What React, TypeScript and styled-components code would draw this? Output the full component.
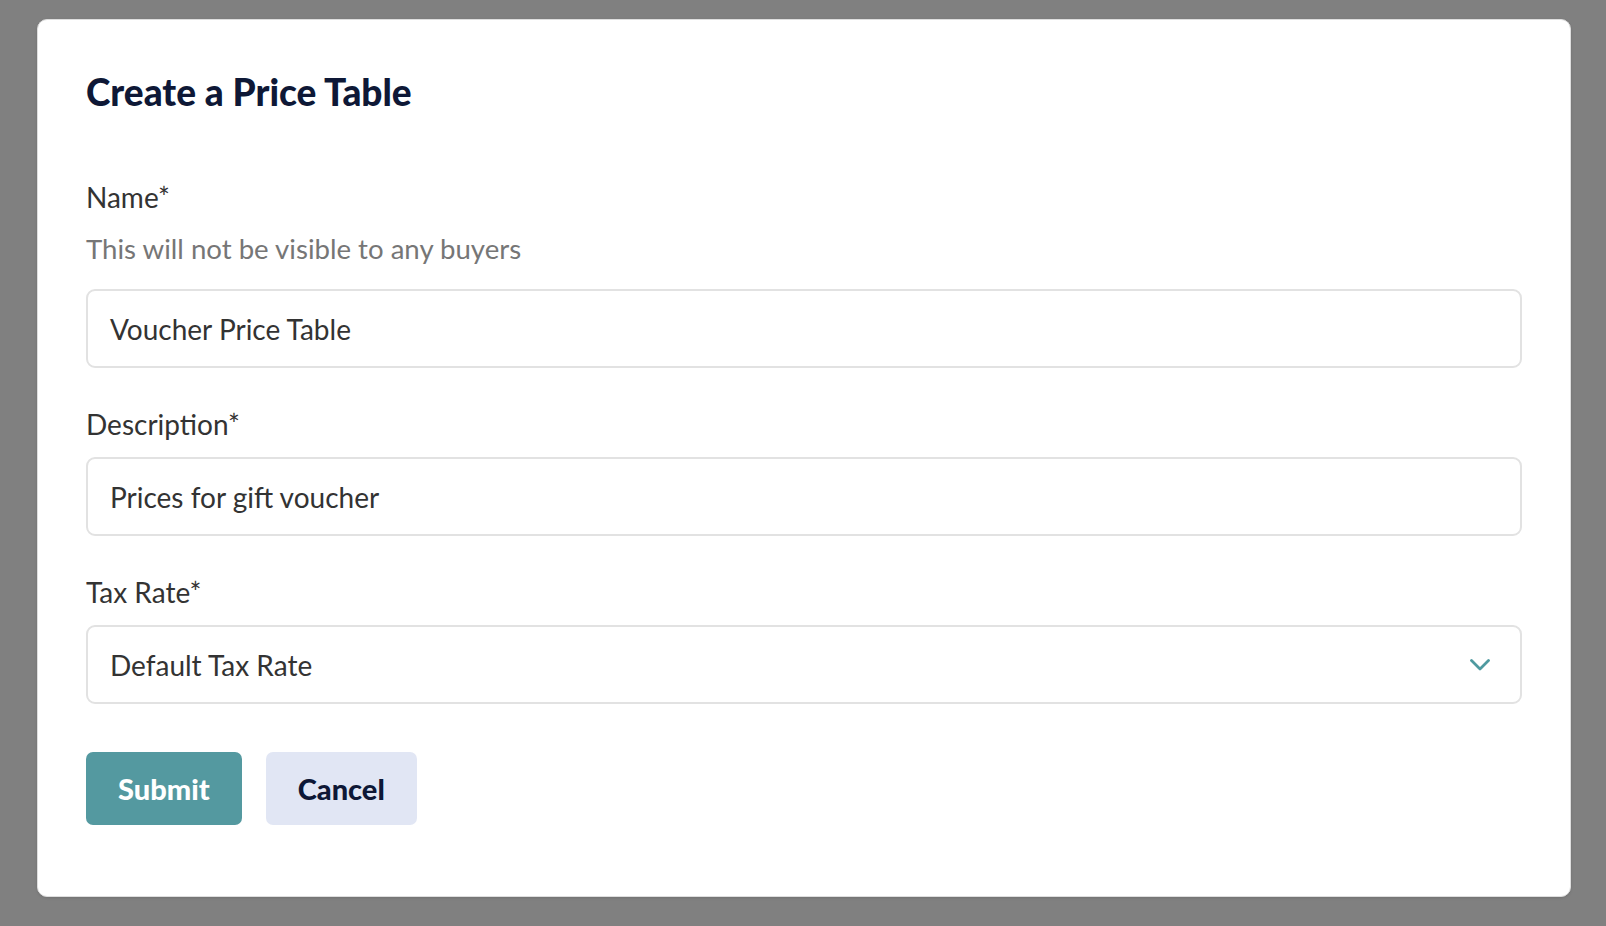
import React from "react";
import styled, { createGlobalStyle } from "styled-components";

const GlobalStyle = createGlobalStyle`
  html, body {
    margin: 0;
    padding: 0;
    background: #808080;
    font-family: Lato, "Open Sans", sans-serif;
  }
  * {
    box-sizing: border-box;
  }
`;

const Backdrop = styled.div`
  min-height: 926px;
  padding: 19px 0 0 37px;
  display: flex;
  align-items: flex-start;
`;

const Card = styled.form`
  width: 1534px;
  background: #ffffff;
  border: 1px solid #dedede;
  border-radius: 10px;
  box-shadow: 0 1px 3px rgba(0, 0, 0, 0.12);
  padding: 50px 48px 71px;
  display: flex;
  flex-direction: column;
`;

const Title = styled.h1`
  margin: 0 0 66px;
  font-size: 37px;
  line-height: 44px;
  font-weight: 900;
  color: #0e1836;
`;

const Fields = styled.div`
  display: flex;
  flex-direction: column;
  gap: 39px;
`;

const Field = styled.div`
  display: flex;
  flex-direction: column;
`;

const Label = styled.label`
  font-size: 28px;
  line-height: 34px;
  color: #333333;
  margin-bottom: 16px;
`;

const Hint = styled.div`
  font-size: 27.6px;
  line-height: 34px;
  color: #767676;
  margin: 2px 0 23px;
`;

const Box = styled.div`
  height: 79px;
  border: 2px solid #e2e2e2;
  border-radius: 9px;
  padding: 0 30px 0 22px;
  display: flex;
  align-items: center;
  justify-content: space-between;
  font-size: 28px;
  color: #333333;
`;

const Chevron = styled.svg`
  width: 20px;
  height: 12px;
  flex: none;
`;

const Actions = styled.div`
  display: flex;
  gap: 24px;
  margin-top: 48px;
`;

const Button = styled.button<{ $primary?: boolean }>`
  height: 73px;
  padding: 0 32px;
  border: none;
  border-radius: 7px;
  font-family: Lato, "Open Sans", sans-serif;
  font-size: 29px;
  font-weight: 900;
  cursor: pointer;
  background: ${(p) => (p.$primary ? "#5499a0" : "#e1e6f4")};
  color: ${(p) => (p.$primary ? "#ffffff" : "#0e1836")};
`;

export default function App() {
  return (
    <>
      <GlobalStyle />
      <Backdrop>
        <Card onSubmit={(e) => e.preventDefault()}>
          <Title>Create a Price Table</Title>
          <Fields>
            <Field>
              <Label>Name*</Label>
              <Hint>This will not be visible to any buyers</Hint>
              <Box>Voucher Price Table</Box>
            </Field>
            <Field>
              <Label>Description*</Label>
              <Box>Prices for gift voucher</Box>
            </Field>
            <Field>
              <Label>Tax Rate*</Label>
              <Box>
                Default Tax Rate
                <Chevron viewBox="0 0 20 12" fill="none">
                  <polyline
                    points="1.5,1.5 10,10 18.5,1.5"
                    stroke="#4f9aa0"
                    strokeWidth="2.8"
                    strokeLinecap="round"
                    strokeLinejoin="round"
                  />
                </Chevron>
              </Box>
            </Field>
          </Fields>
          <Actions>
            <Button $primary type="submit">Submit</Button>
            <Button type="button">Cancel</Button>
          </Actions>
        </Card>
      </Backdrop>
    </>
  );
}
